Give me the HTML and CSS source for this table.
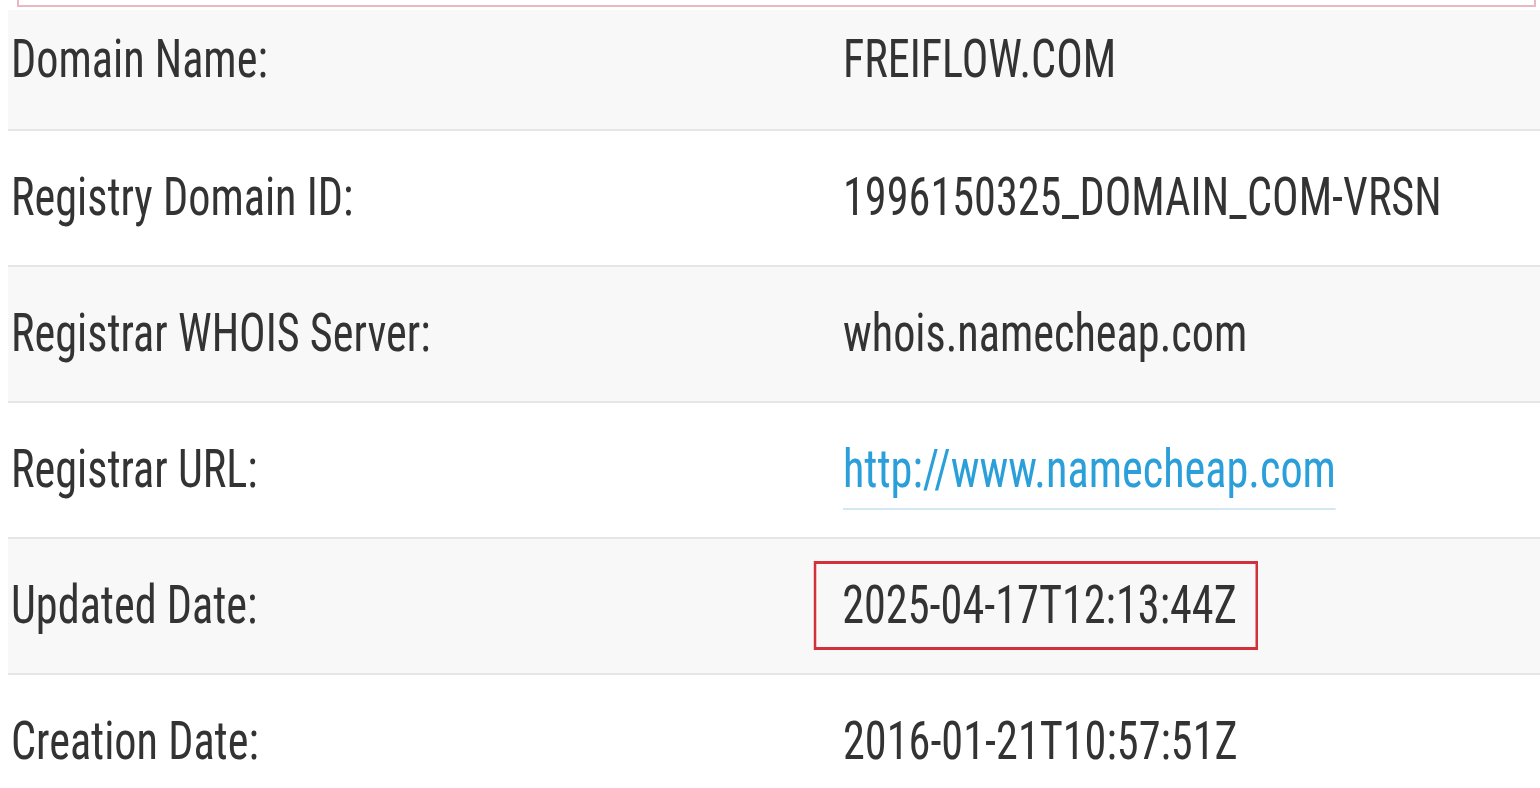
FILE: index.html
```html
<!DOCTYPE html>
<html lang="en">
<head>
    <meta charset="UTF-8">
    <meta name="viewport" content="width=device-width, initial-scale=1.0">
    <title>WHOIS - FREIFLOW.COM</title>
    <link rel="stylesheet" href="styles.css">
</head>
<body>
    <div class="notice-box"></div>

    <div class="whois-table">
        <div class="row row-first">
            <div class="label"><span class="txt">Domain Name:</span></div>
            <div class="value"><span class="txt">FREIFLOW.COM</span></div>
        </div>
        <div class="row">
            <div class="label"><span class="txt">Registry Domain ID:</span></div>
            <div class="value"><span class="txt">1996150325_DOMAIN_COM-VRSN</span></div>
        </div>
        <div class="row">
            <div class="label"><span class="txt">Registrar WHOIS Server:</span></div>
            <div class="value"><span class="txt">whois.namecheap.com</span></div>
        </div>
        <div class="row">
            <div class="label"><span class="txt">Registrar URL:</span></div>
            <div class="value"><span class="txt"><a class="link" href="#">http://www.namecheap.com</a></span></div>
        </div>
        <div class="row">
            <div class="label"><span class="txt">Updated Date:</span></div>
            <div class="value"><span class="txt"><span class="highlight">2025-04-17T12:13:44Z</span></span></div>
        </div>
        <div class="row">
            <div class="label"><span class="txt">Creation Date:</span></div>
            <div class="value"><span class="txt">2016-01-21T10:57:51Z</span></div>
        </div>
    </div>
</body>
</html>
```

FILE: styles.css
```css
:root {
    --text-color: #333333;
    --row-alt: #f8f8f8;
    --row-border: #e6e6e6;
    --link-color: #2b9fd9;
    --link-line: #d3e8f4;
    --mark-color: #d2313b;
    --notice-border: #e9b8c1;
}

body {
    margin: 0;
    background-color: #ffffff;
    color: var(--text-color);
    font-family: "Roboto Condensed", Roboto, "Liberation Sans", sans-serif;
    font-size: 53px;
    line-height: 1;
}

/* caixa de aviso cortada no topo */
.notice-box {
    height: 5px;
    margin: 0 4px 0 17px;
    border: 2px solid var(--notice-border);
    border-top: none;
}

.whois-table {
    margin-left: 8px;
    margin-top: 3px;
}

.row {
    display: flex;
    align-items: center;
    padding: 40px 0 41px 0;
    border-bottom: 2px solid var(--row-border);
}

.row:nth-child(odd) {
    background-color: var(--row-alt);
}

.row-first {
    padding: 23px 0 43px 0;
}

.label {
    width: 832px;
    padding-left: 3px;
    flex-shrink: 0;
}

.value {
    white-space: nowrap;
}

/* o print original tem a fonte mais estreita */
.txt {
    display: inline-block;
    transform: scaleX(0.835);
    transform-origin: left center;
}

.link {
    color: var(--link-color);
    text-decoration: none;
    padding-bottom: 8px;
    border-bottom: 2px solid var(--link-line);
}

.highlight {
    display: inline-block;
    margin: -18px 0 -18px -35px;
    padding: 15px 22px 15px 31px;
    border: 3px solid var(--mark-color);
}
```
